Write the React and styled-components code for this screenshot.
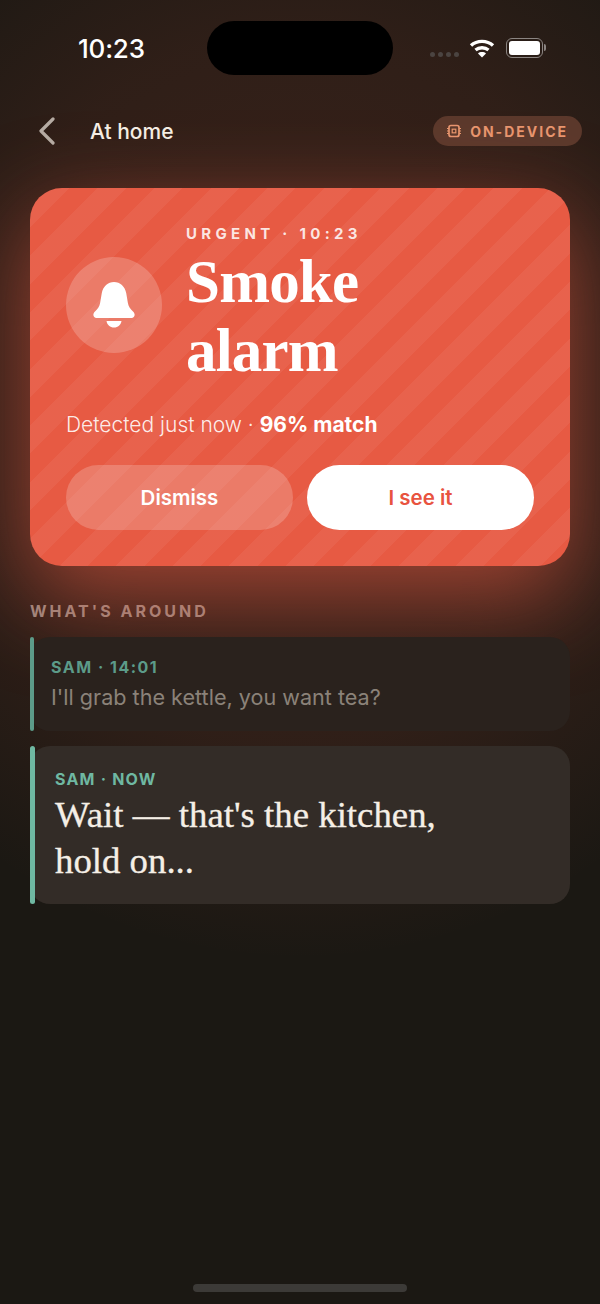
import React from 'react';
import styled, { createGlobalStyle } from 'styled-components';

const Global = createGlobalStyle`
	* { box-sizing: border-box; }
	html, body { margin: 0; padding: 0; background: #1b1813; }
	body { font-family: Inter, "Liberation Sans", sans-serif; -webkit-font-smoothing: antialiased; }
`;

const Screen = styled.div`
	width: 600px;
	height: 1304px;
	overflow: hidden;
	position: relative;
	padding: 21px 30px 0;
	background:
		radial-gradient(ellipse 540px 570px at 300px 390px, rgba(226, 90, 66, 0.17) 0%, rgba(226, 90, 66, 0.1) 62%, rgba(226, 90, 66, 0) 100%),
		#1b1813;
`;

const StatusBar = styled.div`
	display: grid;
	grid-template-columns: 177px 186px 1fr;
	height: 54px;
	margin: 0 -30px 0 0;
	align-items: center;
`;

const Time = styled.div`
	padding-left: 48px;
	color: #fff;
	font-size: 26px;
	font-weight: 500;
	letter-spacing: -0.2px;
`;

const Island = styled.div`
	height: 54px;
	border-radius: 27px;
	background: #000;
`;

const StatusIcons = styled.div`
	display: flex;
	align-items: center;
	padding-left: 37px;
`;

const Dots = styled.div`
	display: flex;
	gap: 3px;
	margin-top: 12px;
	margin-right: 10px;
`;

const Dot = styled.span`
	width: 5px;
	height: 5px;
	border-radius: 50%;
	background: #4b4441;
`;

const Battery = styled.div`
	position: relative;
	width: 37px;
	height: 20px;
	margin-left: 11px;
	padding: 2px;
	border: 1.5px solid #8b8582;
	border-radius: 6px;
	&::after {
		content: '';
		position: absolute;
		right: -4px;
		top: 5px;
		width: 2px;
		height: 7px;
		border-radius: 0 2px 2px 0;
		background: #8b8582;
	}
`;

const BatteryFill = styled.div`
	height: 100%;
	border-radius: 3px;
	background: #fff;
`;

const Header = styled.header`
	display: flex;
	align-items: center;
	height: 30px;
	margin: 41px -12px 0 8px;
`;

const Back = styled.div`
	display: flex;
	width: 52px;
`;

const Title = styled.div`
	flex: 1;
	color: #f5efe6;
	font-size: 21px;
	font-weight: 500;
`;

const Pill = styled.div`
	display: flex;
	align-items: center;
	gap: 9px;
	height: 30px;
	padding: 0 14px;
	border-radius: 15px;
	background: #5b392c;
	color: #e8966f;
	font-size: 14px;
	font-weight: 700;
	letter-spacing: 2px;
`;

const Card = styled.section`
	position: relative;
	margin-top: 42px;
	height: 378px;
	padding: 37px 36px 0;
	border-radius: 32px;
	background-color: #e75a43;
	background-image: repeating-linear-gradient(135deg, rgba(255, 255, 255, 0) 0 8px, rgba(255, 255, 255, 0.05) 8px 28px, rgba(255, 255, 255, 0) 28px 40px);
	box-shadow: 0 30px 90px rgba(233, 91, 69, 0.6);
`;

const Hero = styled.div`
	display: flex;
	align-items: center;
	gap: 24px;
`;

const Circle = styled.div`
	display: flex;
	align-items: center;
	justify-content: center;
	flex: none;
	width: 96px;
	height: 96px;
	border-radius: 50%;
	background: rgba(255, 255, 255, 0.2);
`;

const Eyebrow = styled.div`
	color: rgba(255, 255, 255, 0.85);
	font-size: 15px;
	line-height: 18px;
	font-weight: 700;
	letter-spacing: 4.3px;
`;

const Headline = styled.h1`
	margin: 4px 0 0;
	color: #fff;
	font-family: "Liberation Serif", serif;
	font-size: 61px;
	line-height: 69px;
	font-weight: 700;
	letter-spacing: -0.8px;
`;

const Detected = styled.p`
	margin: 27px 0 0;
	color: rgba(255, 255, 255, 0.9);
	font-size: 21px;
	line-height: 26px;
	font-weight: 300;
	b {
		color: #fff;
		font-weight: 700;
	}
`;

const Actions = styled.div`
	display: grid;
	grid-template-columns: 1fr 1fr;
	gap: 14px;
	margin-top: 27px;
`;

const Action = styled.button`
	height: 65px;
	border: 0;
	border-radius: 33px;
	background: ${(props) => (props.$solid ? '#fff' : 'rgba(255, 255, 255, 0.2)')};
	color: ${(props) => (props.$solid ? '#e8533f' : '#fff')};
	font-family: inherit;
	font-size: 20.5px;
	font-weight: 600;
`;

const Section = styled.div`
	margin-top: 35px;
	color: #9c8a81;
	font-size: 16px;
	line-height: 20px;
	font-weight: 700;
	letter-spacing: 3px;
`;

const Note = styled.article`
	position: relative;
	margin-top: ${(props) => (props.$live ? '15px' : '16px')};
	padding: ${(props) => (props.$live ? '23px 25px 0' : '20px 21px 0')};
	height: ${(props) => (props.$live ? '158px' : '94px')};
	border-radius: 20px;
	background: ${(props) => (props.$live ? '#332c27' : '#2a221d')};
	&::before {
		content: '';
		position: absolute;
		left: 0;
		top: 0;
		bottom: 0;
		width: ${(props) => (props.$live ? '5px' : '4px')};
		border-radius: 3px;
		background: ${(props) => (props.$live ? '#6fb8a2' : '#5c9b89')};
	}
`;

const Meta = styled.div`
	color: ${(props) => (props.$live ? '#6fb8a2' : '#5c9b89')};
	font-size: 16px;
	line-height: 20px;
	font-weight: 700;
	letter-spacing: ${(props) => (props.$live ? '1.2px' : '1.5px')};
`;

const Plain = styled.div`
	margin-top: 7px;
	color: #8b8279;
	font-size: 21.6px;
	line-height: 26px;
	font-weight: 400;
`;

const Spoken = styled.div`
	margin-top: 3px;
	max-width: 420px;
	color: #f5efe6;
	font-family: "Liberation Serif", serif;
	font-size: 36.8px;
	line-height: 46px;
	-webkit-text-stroke: 0.3px #f5efe6;
`;

const HomeBar = styled.div`
	position: absolute;
	left: 193px;
	bottom: 12px;
	width: 214px;
	height: 8px;
	border-radius: 4px;
	background: #3c3a37;
`;

const Wifi = () => (
	<svg width="26" height="20" viewBox="0 0 26 20" fill="none" stroke="#fff" strokeWidth="3.4">
		<path d="M2 7.5C8 2 18 2 24 7.5" />
		<path d="M6.5 12C10 9 16 9 19.5 12" />
		<path d="M13 19.5L9 15.4C11 13.6 15 13.6 17 15.4Z" fill="#fff" stroke="none" />
	</svg>
);

const Chevron = () => (
	<svg width="18" height="28" viewBox="0 0 18 28" fill="none" stroke="#b5aca4" strokeWidth="3.2" strokeLinecap="round" strokeLinejoin="round">
		<path d="M15 2L3 14L15 26" />
	</svg>
);

const Chip = () => (
	<svg width="14" height="14" viewBox="0 0 14 14" fill="none" stroke="#e8966f" strokeWidth="1.7">
		<rect x="2" y="1.5" width="10" height="11" rx="2" />
		<rect x="5.2" y="5.2" width="3.6" height="3.6" strokeWidth="1.2" />
		<path d="M0 4.5H2M0 7H2M0 9.5H2M12 4.5H14M12 7H14M12 9.5H14" strokeWidth="1" />
	</svg>
);

const Bell = () => (
	<svg width="42" height="46" viewBox="0 0 42 46" fill="#fff">
		<path d="M21 0C27 0 32 4.5 33.2 11L34.8 20.5C35.4 24.5 37.2 27 40 29.5C43 32.2 41.5 36 38.5 36H3.5C0.5 36 -1 32.2 2 29.5C4.8 27 6.6 24.5 7.2 20.5L8.8 11C10 4.5 15 0 21 0Z" />
		<path d="M13.5 39H28.5C27.8 43 25 45.5 21 45.5C17 45.5 14.2 43 13.5 39Z" />
	</svg>
);

export default function App() {
	return (
		<Screen>
			<Global />
			<StatusBar>
				<Time>10:23</Time>
				<Island />
				<StatusIcons>
					<Dots>
						<Dot />
						<Dot />
						<Dot />
						<Dot />
					</Dots>
					<Wifi />
					<Battery>
						<BatteryFill />
					</Battery>
				</StatusIcons>
			</StatusBar>
			<Header>
				<Back>
					<Chevron />
				</Back>
				<Title>At home</Title>
				<Pill>
					<Chip />
					ON-DEVICE
				</Pill>
			</Header>
			<Card>
				<Hero>
					<Circle>
						<Bell />
					</Circle>
					<div>
						<Eyebrow>URGENT · 10:23</Eyebrow>
						<Headline>
							Smoke
							<br />
							alarm
						</Headline>
					</div>
				</Hero>
				<Detected>
					Detected just now · <b>96% match</b>
				</Detected>
				<Actions>
					<Action>Dismiss</Action>
					<Action $solid>I see it</Action>
				</Actions>
			</Card>
			<Section>WHAT'S AROUND</Section>
			<Note>
				<Meta>SAM · 14:01</Meta>
				<Plain>I'll grab the kettle, you want tea?</Plain>
			</Note>
			<Note $live>
				<Meta $live>SAM · NOW</Meta>
				<Spoken>Wait — that's the kitchen, hold on...</Spoken>
			</Note>
			<HomeBar />
		</Screen>
	);
}
